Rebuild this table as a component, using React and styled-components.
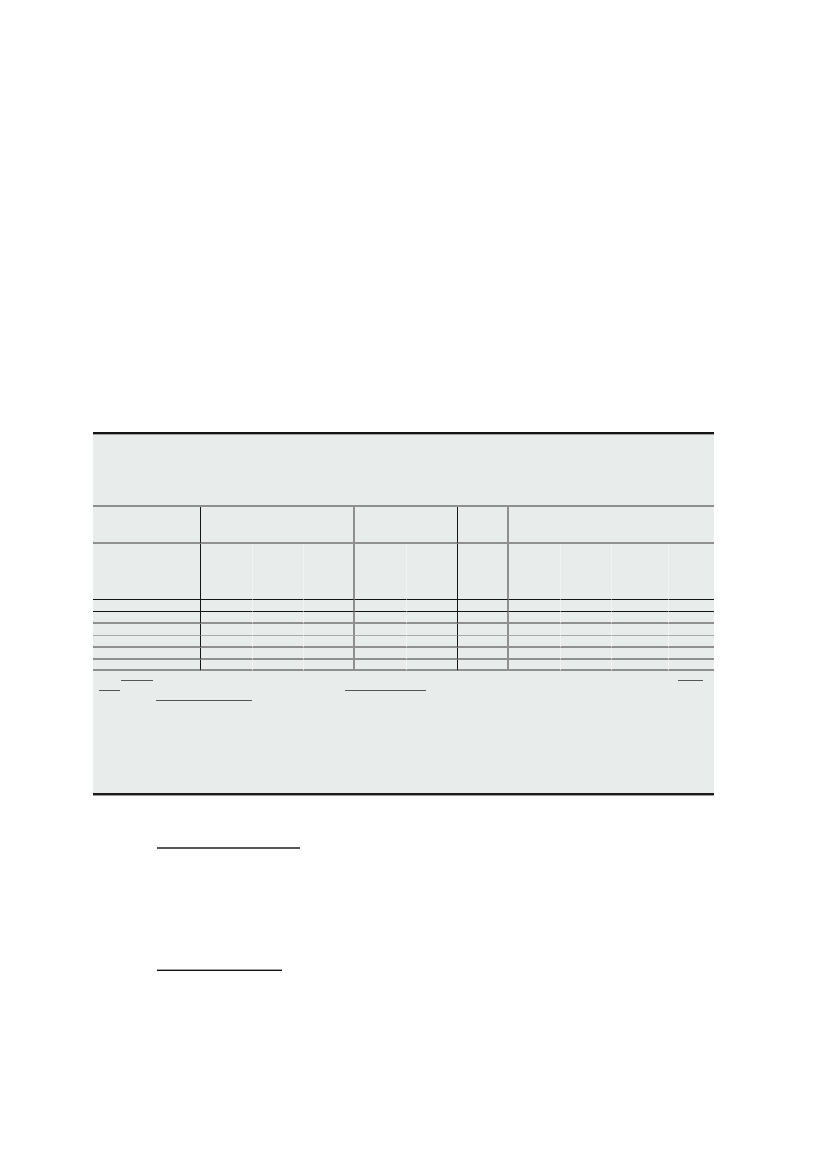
import styled, { createGlobalStyle } from "styled-components";

const GlobalStyle = createGlobalStyle`
  html, body {
    margin: 0;
    padding: 0;
    background: #ffffff;
    font-family: "Liberation Serif", "Times New Roman", serif;
  }
`;

const lines = {
  black: "1px solid #151515",
  grey: "2px solid #8f8f8f",
  light: "1px solid #a9a9a9",
  faint: "1px solid #f1f4f3",
  none: "0 none",
};

const Page = styled.div`
  width: 827px;
  min-height: 1170px;
  padding-top: 432px;
  box-sizing: border-box;
`;

const Panel = styled.div`
  margin-left: 93px;
  width: 621px;
  background-color: #e8edeb;
  border-top: 2px solid #151515;
  border-bottom: 2px solid #1a1a1a;
  box-shadow: 0 1px 0 #9a9a9a;
`;

const Caption = styled.div`
  height: 73px;
  border-top: 1px solid #a0a0a0;
  border-bottom: 2px solid #8f8f8f;
  box-sizing: border-box;
`;

const Grid = styled.div`
  display: grid;
  grid-template-columns: 108px 52px 51px 51px 52px 51px 51px 52px 51px 57px 45px;
`;

const Cell = styled.div`
  grid-column: span ${(props) => props.$span || 1};
  height: ${(props) => props.$h}px;
  box-sizing: border-box;
  border-right: ${(props) => lines[props.$right || "none"]};
  border-bottom: ${(props) => lines[props.$bottom || "none"]};
`;

const Notes = styled.div`
  height: 122px;
  box-sizing: border-box;
`;

const NoteLine = styled.div`
  display: flex;
  height: 10px;
  align-items: flex-end;
`;

const Link = styled.span`
  display: block;
  margin-left: ${(props) => props.$gap}px;
  width: ${(props) => props.$w}px;
  height: 0;
  border-bottom: 1px solid #555;
`;

const Heading = styled.div`
  margin-left: 157px;
  margin-top: ${(props) => props.$top}px;
  width: ${(props) => props.$w}px;
  height: 0;
  border-bottom: ${(props) =>
    props.$thin ? "1px solid #111" : "2px solid #555"};
  box-shadow: ${(props) => (props.$thin ? "0 -1px 0 #a0a0a0" : "none")};
`;

// right edge line of each column in the body rows
const columnLines = [
  "black",
  "faint",
  "faint",
  "grey",
  "faint",
  "black",
  "grey",
  "faint",
  "faint",
  "faint",
  "none",
];

const groups = [
  { span: 1, right: "black" },
  { span: 3, right: "grey" },
  { span: 2, right: "black" },
  { span: 1, right: "grey" },
  { span: 4, right: "none" },
];

const rows = [
  { h: 12, bottom: "black" },
  { h: 12, bottom: "grey" },
  { h: 12, bottom: "light" },
  { h: 12, bottom: "grey" },
  { h: 12, bottom: "grey" },
  { h: 11, bottom: "grey" },
];

const notes = [
  [{ gap: 28, w: 32 }, { gap: 525, w: 25 }],
  [{ gap: 6, w: 21 }, { gap: 225, w: 81 }],
  [{ gap: 63, w: 96 }],
];

function App() {
  return (
    <>
      <GlobalStyle />
      <Page>
        <Panel>
          <Caption />
          <Grid>
            {groups.map((group, i) => (
              <Cell
                key={"g" + i}
                $span={group.span}
                $h={37}
                $right={group.right}
                $bottom="grey"
              />
            ))}
            {columnLines.map((line, i) => (
              <Cell key={"s" + i} $h={56} $right={line} $bottom="black" />
            ))}
            {rows.map((row, r) =>
              columnLines.map((line, i) => (
                <Cell
                  key={r + "-" + i}
                  $h={row.h}
                  $right={line}
                  $bottom={row.bottom}
                />
              ))
            )}
          </Grid>
          <Notes>
            {notes.map((line, i) => (
              <NoteLine key={i}>
                {line.map((link, j) => (
                  <Link key={j} $gap={link.gap} $w={link.w} />
                ))}
              </NoteLine>
            ))}
          </Notes>
        </Panel>
        <Heading $top={52} $w={143} />
        <Heading $top={121} $w={125} $thin />
      </Page>
    </>
  );
}

export default App;
